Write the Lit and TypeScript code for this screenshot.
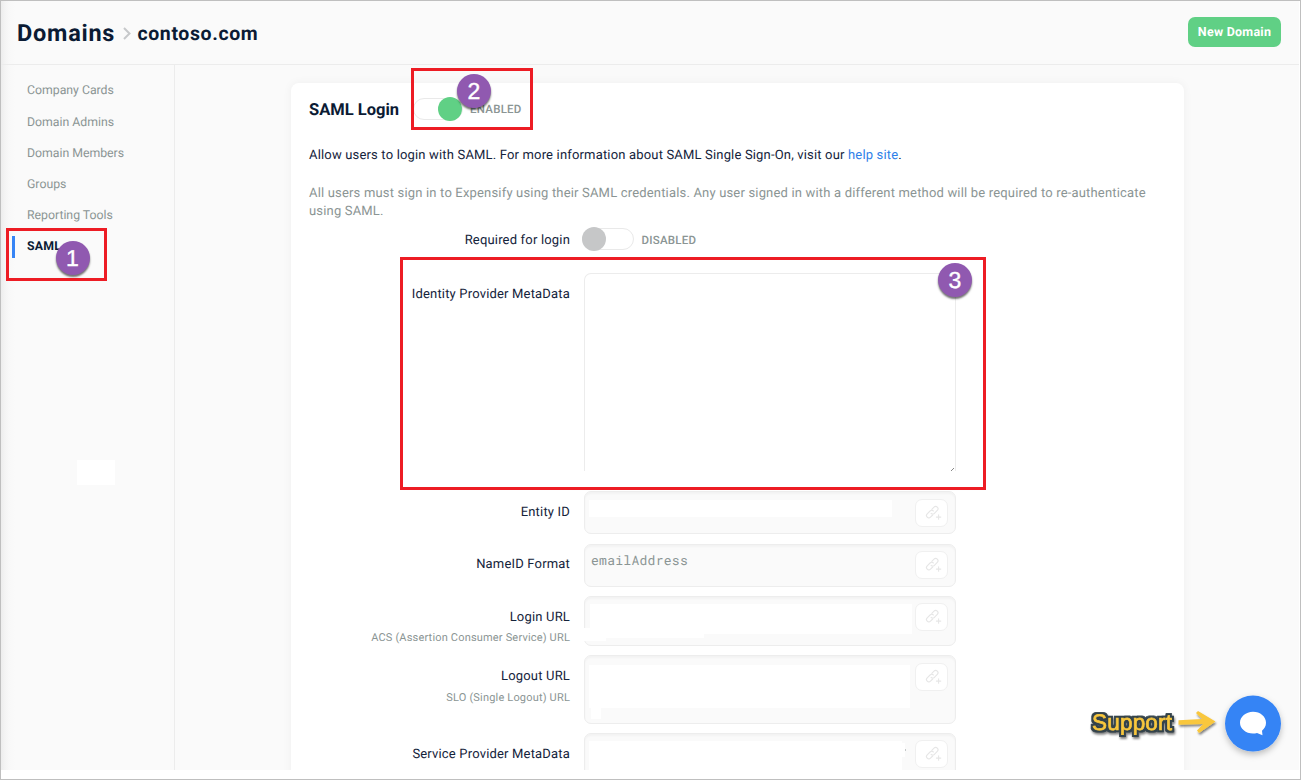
import { LitElement, html, css, nothing } from "lit";
import { customElement, property } from "lit/decorators.js";
import { classMap } from "lit/directives/class-map.js";

@customElement("link-button")
class LinkButton extends LitElement {
  static styles = css`
    :host { display: block; width: 33px; height: 28px; }
    .btn { width: 33px; height: 28px; box-sizing: border-box; border: 1px solid #f0f0f0; border-radius: 7px; background: #fff; }
    svg { display: block; }
  `;
  render() {
    return html`<div class="btn"><svg width="31" height="26" viewBox="0 0 31 26" fill="none" stroke="#e6e6e6" stroke-width="1.1" stroke-linecap="round">
      <path d="M15.8 9.300 18 7.100a2.300 2.300 0 0 1 3.300 3.300l-2.900 2.900a2.300 2.300 0 0 1-3.300 0"/>
      <path d="M16.700 15 14.500 17.200a2.300 2.300 0 0 1-3.300-3.300l2.900-2.900a2.300 2.300 0 0 1 3.300 0"/>
      <path d="M22.600 14.900v4.400M20.400 17.100h4.400"/>
    </svg></div>`;
  }
}

@customElement("toggle-switch")
class ToggleSwitch extends LitElement {
  @property({ type: Boolean }) on = false;
  static styles = css`
    :host { display: block; width: 52px; height: 24px; }
    .track { box-sizing: border-box; width: 50px; height: 22px; border: 1px solid #e9e9e9; border-radius: 11px; background: #fff; display: flex; align-items: center; }
    .track.off { width: 52px; }
    .knob { width: 24px; height: 24px; border-radius: 50%; background: #c6c7c8; flex: none; margin-left: -1px; }
    .track.on .knob { background: #60d085; margin-left: 24px; }
    .wrap { display: flex; align-items: center; height: 24px; }
  `;
  render() {
    return html`<div class="wrap"><div class=${classMap({ track: true, on: this.on, off: !this.on })}><div class="knob"></div></div></div>`;
  }
}

@customElement("app-root")
class AppRoot extends LitElement {
  static styles = css`
    :host { display: block; width: 1301px; height: 780px; overflow: hidden; position: relative; font-family: Roboto, "Liberation Sans", sans-serif; color: #0b1b34; text-rendering: geometricPrecision; }
    .frame { box-sizing: border-box; width: 1301px; height: 780px; border: 1px solid #bfbfbf; background: #fff; overflow: hidden; }
    .page { height: 769px; width: 1298px; background: linear-gradient(to right, #ededed 0, #f4f4f4 4px, #f8f8f8 8px, #fafafa 14px); display: flex; flex-direction: column; overflow: hidden; }
    .header { height: 63px; flex: none; border-bottom: 1px solid #ececec; display: flex; align-items: center; padding: 0 18px 0 16px; }
    .h1 { font-size: 23.5px; font-weight: 700; letter-spacing: 0.75px; white-space: nowrap; width: 105px; line-height: 30px; padding-top: 1px; }
    .crumb { width: 16px; height: 16px; display: block; }
    .h2 { font-size: 19.5px; font-weight: 700; letter-spacing: 0.6px; flex: 1; line-height: 30px; padding-top: 2px; margin-left: -0.5px; }
    .new { box-sizing: border-box; width: 93px; height: 30px; border-radius: 7px; background: #60d085; color: #fff; font-size: 12.5px; font-weight: 700; letter-spacing: 0.25px; line-height: 31px; text-align: center; margin-bottom: 1px; white-space: nowrap; }
    .body { flex: 1; display: flex; min-height: 0; }
    .side { width: 173px; flex: none; border-right: 1px solid #ececec; padding-top: 10px; }
    .item { height: 31.2px; box-sizing: border-box; padding-top: 1.600px; display: flex; align-items: center; padding-left: 26px; font-size: 12.3px; letter-spacing: -0.02px; color: #8b9594; white-space: nowrap; }
    .item.active { color: #0b1b34; font-weight: 700; letter-spacing: 0.2px; padding-left: 11px; }
    .bar { width: 3px; height: 22px; background: #3684f5; margin: -1px 12px 0 0; }
    .blank { width: 38px; height: 25px; background: #fff; margin: 197.800px 0 0 76px; }
    .main { flex: 1; padding: 18px 0 0 116px; }
    .card { box-sizing: border-box; width: 893px; height: 700px; border-radius: 8px; background: #fff; box-shadow: 0 0 10px rgba(0, 0, 0, 0.05); padding-top: 13px; }
    .title { display: flex; align-items: center; height: 26px; padding-left: 18px; }
    .title .name { font-size: 16.5px; font-weight: 700; letter-spacing: 0; width: 104px; white-space: nowrap; padding-top: 2px; }
    .state { font-size: 11.5px; font-weight: 500; letter-spacing: 0.25px; color: #8b9594; padding-top: 2px; }
    .title .state { margin-left: 5px; padding-top: 0; }
    .intro { margin: 24px 0 0 18px; height: 20px; line-height: 20px; font-size: 13px; letter-spacing: 0.17px; white-space: nowrap; color: #14233b; }
    .link { color: #2f7fe8; }
    .note { margin: 19px 0 0 18px; line-height: 18px; height: 36px; font-size: 13px; letter-spacing: 0.176px; color: #8b9594; white-space: nowrap; }
    .row { display: flex; gap: 14px; }
    .label { width: 279px; flex: none; text-align: right; font-size: 13px; letter-spacing: 0.18px; line-height: 20px; white-space: nowrap; color: #14233b; }
    .sub { font-size: 11px; letter-spacing: 0.18px; color: #8b9594; line-height: 20px; margin-top: 1px; }
    .sub.tight { margin-top: 0; }
    .required { margin-top: 5px; height: 25px; align-items: center; overflow: hidden; }
    .required .label { padding-top: 4px; }
    .required toggle-switch { margin-left: -2.5px; }
    .required .state { margin-left: -6px; }
    .meta { margin-top: 22px; height: 198px; }
    .area { box-sizing: border-box; width: 372px; height: 198px; border: 1px solid #ececec; border-bottom: none; border-radius: 7px 7px 0 0; display: flex; align-items: flex-end; justify-content: flex-end; }
    .field { box-sizing: border-box; width: 372px; border: 1px solid #ededed; border-radius: 7px; background: #fafafa; box-shadow: inset 0 2px 2px rgba(0, 0, 0, 0.03); display: flex; position: relative; justify-content: flex-end; padding: 7px 7px 0 6px; }
    .value { flex: 1; font-family: "Roboto Mono", "Liberation Mono", monospace; font-size: 13px; letter-spacing: 0.28px; color: #8b9594; line-height: 18px; }
    .cover { position: absolute; background: #fff; }
    .tick { position: absolute; left: 320px; top: 15px; width: 1px; height: 2px; background: #c4c8c8; }
    .mark { position: absolute; border: 3px solid #ed1c24; box-sizing: border-box; }
    .badge { position: absolute; width: 34px; height: 34px; border-radius: 50%; background: #9059b0; color: #fff; font-family: "Liberation Sans", sans-serif; font-size: 23px; line-height: 34px; text-align: center; -webkit-text-stroke: 0.4px #fff; box-shadow: 0 2px 2px rgba(0, 0, 0, 0.55); }
    .overlay { position: absolute; left: 1080px; top: 680px; }
  `;

  badge(n: number, x: number, y: number) {
    return html`<div class="badge" style="left:${x}px;top:${y}px">${n}</div>`;
  }
  mark(x: number, y: number, w: number, h: number) {
    return html`<div class="mark" style="left:${x}px;top:${y}px;width:${w}px;height:${h}px"></div>`;
  }
  field(label: string, sub: string, top: number, pad: number, h: number, btn: number, covers: number[][], value = "", tick = false) {
    return html`<div class="row" style="margin-top:${top}px;height:${h}px">
      <div class="label" style="padding-top:${pad}px">${label}${sub ? html`<div class=${classMap({ sub: true, tight: h === 50 })}>${sub}</div>` : nothing}</div>
      <div class="field" style="height:${h}px;padding-top:${btn}px">
        <div class="value">${value}</div>
        ${covers.map((c) => html`<div class="cover" style="left:${c[0]}px;top:${c[1]}px;width:${c[2]}px;height:${c[3]}px"></div>`)}
        ${tick ? html`<div class="tick"></div>` : nothing}
        <link-button></link-button>
      </div>
    </div>`;
  }

  render() {
    return html`
      <div class="frame"><div class="page">
        <div class="header">
          <div class="h1">Domains</div>
          <svg class="crumb" viewBox="0 0 16 16" fill="none" stroke="#c6c8ca" stroke-width="2"><path d="M2 3l5.500 5.500L2 14"/></svg>
          <div class="h2">contoso.com</div>
          <div class="new">New Domain</div>
        </div>
        <div class="body">
          <div class="side">
            ${["Company Cards", "Domain Admins", "Domain Members", "Groups", "Reporting Tools"].map((t) => html`<div class="item">${t}</div>`)}
            <div class="item active"><div class="bar"></div>SAML</div>
            <div class="blank"></div>
          </div>
          <div class="main"><div class="card">
            <div class="title"><div class="name">SAML Login</div><toggle-switch on></toggle-switch><div class="state">ENABLED</div></div>
            <div class="intro">Allow users to login with SAML. For more information about SAML Single Sign-On, visit our <span class="link">help site</span>.</div>
            <div class="note">All users must sign in to Expensify using their SAML credentials. Any user signed in with a different method will be required to re-authenticate<br>using SAML.</div>
            <div class="row required"><div class="label">Required for login</div><toggle-switch></toggle-switch><div class="state">DISABLED</div></div>
            <div class="row meta"><div class="label" style="padding-top:12px">Identity Provider MetaData</div>
              <div class="area"><svg width="4" height="4" viewBox="0 0 4 4" stroke="#888" stroke-width="1"><path d="M0 4L3 1"/></svg></div></div>
            ${this.field("Entity ID", "", 20, 12, 43, 7, [[4, 8, 303, 17]])}
            ${this.field("NameID Format", "", 10, 11, 43, 6, [], "emailAddress")}
            ${this.field("Login URL", "ACS (Assertion Consumer Service) URL", 9, 11.5, 50, 6, [[5, 7, 322, 30], [-1, 31, 120, 10], [-1, 31, 22, 13]])}
            ${this.field("Logout URL", "SLO (Single Logout) URL", 9, 12, 69, 7, [[4, 9, 321, 43], [6, 50, 10, 13]])}
            ${this.field("Service Provider MetaData", "", 9, 12, 68, 6, [[4, 7, 313, 50], [310, 9, 10, 14]], "", true)}
          </div></div>
        </div>
      </div></div>
      ${this.mark(6, 228, 101, 53)}${this.mark(411, 68, 122, 62)}${this.mark(400, 257, 586, 233)}
      ${this.badge(1, 55.5, 241)}${this.badge(2, 457, 73.5)}${this.badge(3, 938, 263)}
      <svg class="overlay" width="220" height="99" viewBox="1080 680 220 99">
        <defs>
          <filter id="s" x="-30%" y="-30%" width="160%" height="180%"><feDropShadow dx="0" dy="3" stdDeviation="3" flood-color="#000" flood-opacity="0.25"/></filter>
          <filter id="t" x="-20%" y="-20%" width="140%" height="160%"><feDropShadow dx="1" dy="2" stdDeviation="1" flood-color="#000" flood-opacity="0.5"/></filter>
          <filter id="o" x="-10%" y="-30%" width="120%" height="170%" color-interpolation-filters="sRGB">
            <feMorphology in="SourceAlpha" operator="dilate" radius="1.5" result="d"/>
            <feGaussianBlur in="d" stdDeviation="0.4" result="b"/>
            <feFlood flood-color="#33424a"/><feComposite in2="b" operator="in" result="ring"/>
            <feGaussianBlur in="d" stdDeviation="1" result="sb"/>
            <feOffset in="sb" dx="1" dy="2" result="so"/>
            <feFlood flood-color="#000" flood-opacity="0.5"/><feComposite in2="so" operator="in" result="shadow"/>
            <feMerge><feMergeNode in="shadow"/><feMergeNode in="ring"/><feMergeNode in="SourceGraphic"/></feMerge>
          </filter>
        </defs>
        <text x="1092" y="730" textLength="80" font-family="Liberation Sans" font-size="22.5" fill="#f9c73d" stroke="#f9c73d" stroke-width="0.7" filter="url(#o)">Support</text>
        <path d="M1178.500 720.300l23.500-1.300-6-6 2-2 17.500 10.500-16.500 11.500-2-2.500 6-6.500-24.500.8z" fill="#f9c73d" filter="url(#t)"/>
        <circle cx="1253" cy="723.6" r="28" fill="#3684f5" filter="url(#s)"/>
        <path d="M1253 711.800c7.200 0 13 4.900 13 11 0 3.400-1.600 6-4 7.900l.5 4.600-5.500-2.300c-1.300.4-2.600.6-4 .6-7.200 0-13-4.900-13-10.800s5.800-11 13-11z" fill="#fff"/>
      </svg>
    `;
  }
}
